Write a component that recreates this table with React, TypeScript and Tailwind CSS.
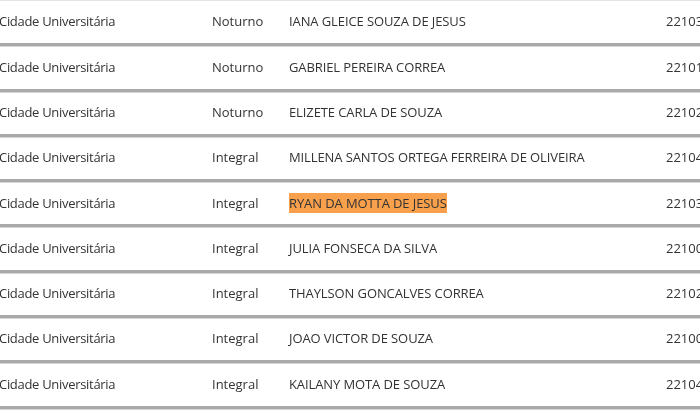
const linhas = [
  { turno: "Noturno", nome: "IANA GLEICE SOUZA DE JESUS", num: "2210354" },
  { turno: "Noturno", nome: "GABRIEL PEREIRA CORREA", num: "2210187" },
  { turno: "Noturno", nome: "ELIZETE CARLA DE SOUZA", num: "2210236" },
  { turno: "Integral", nome: "MILLENA SANTOS ORTEGA FERREIRA DE OLIVEIRA", num: "2210412" },
  { turno: "Integral", nome: "RYAN DA MOTTA DE JESUS", num: "2210398", destaque: true },
  { turno: "Integral", nome: "JULIA FONSECA DA SILVA", num: "2210065" },
  { turno: "Integral", nome: "THAYLSON GONCALVES CORREA", num: "2210221" },
  { turno: "Integral", nome: "JOAO VICTOR DE SOUZA", num: "2210009" },
  { turno: "Integral", nome: "KAILANY MOTA DE SOUZA", num: "2210473" },
];

export default function App() {
  return (
    <div className="w-[700px] h-[410px] overflow-hidden bg-white">
      <div className="blur-[0.4px] font-['Open_Sans',sans-serif] text-[13px] font-medium text-[#333]">
        <div className="h-[1px] bg-[#e4e4e4]" />
        {linhas.map((l, i) => (
          <div
            key={i}
            className="h-[45.3px] flex items-center border-b-[3px] border-[#a9a9a9] shadow-[0_1px_0_#d6d6d6] whitespace-nowrap"
          >
            <div className="w-[213px] -ml-[1px] shrink-0 tracking-[-0.3px]">Cidade Universitária</div>
            <div className="w-[77px] shrink-0">{l.turno}</div>
            <div className="w-[377px] shrink-0 tracking-[-0.1px]">
              {l.destaque ? (
                <span className="bg-[#f8a04c] py-[1px]">{l.nome}</span>
              ) : (
                l.nome
              )}
            </div>
            <div className="shrink-0">{l.num}</div>
          </div>
        ))}
      </div>
    </div>
  );
}
